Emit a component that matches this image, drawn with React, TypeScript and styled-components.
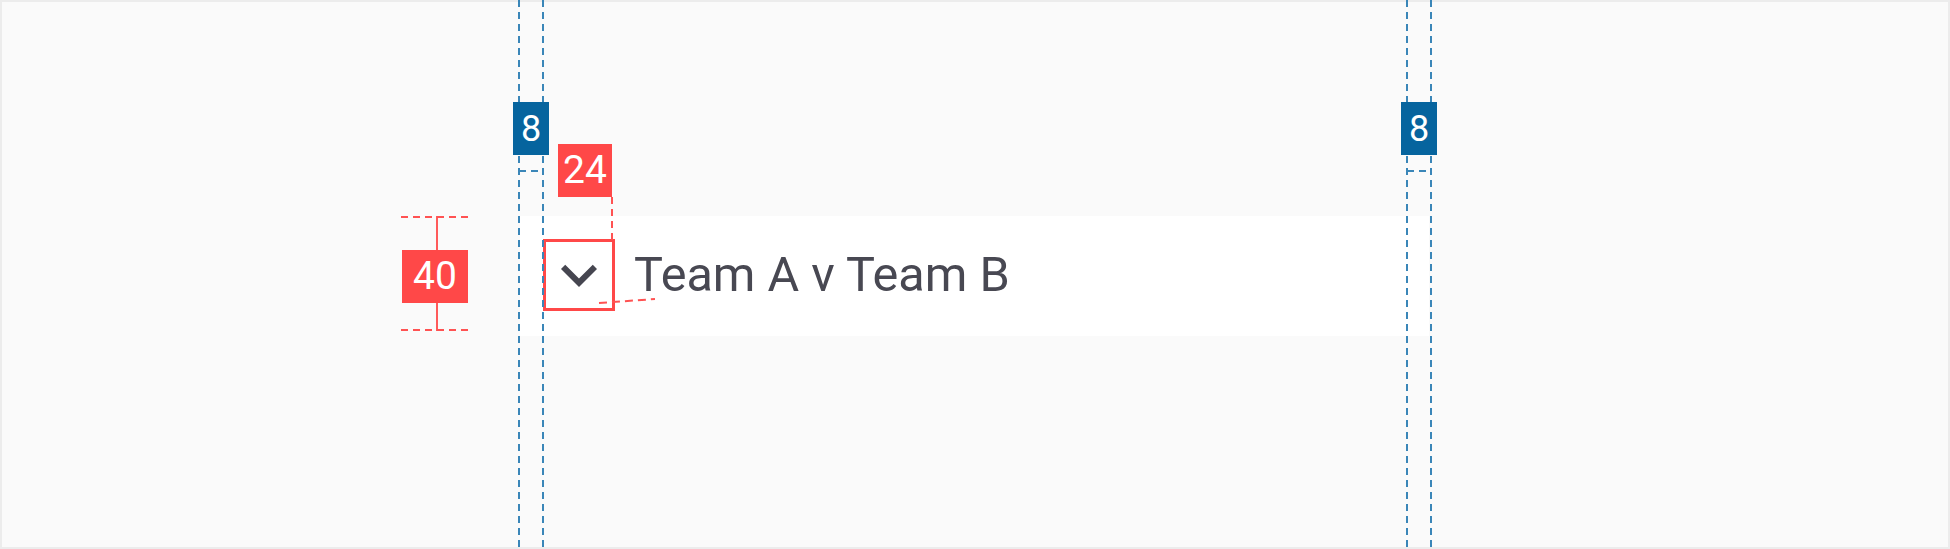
import React from "react";
import styled, { createGlobalStyle } from "styled-components";

const GlobalStyle = createGlobalStyle`
  html, body {
    margin: 0;
    padding: 0;
    background: #fafafa;
  }
  body {
    font-family: Roboto, "Noto Sans", "Liberation Sans", sans-serif;
  }
  * { box-sizing: border-box; }
`;

const BLUE = "#3a86b8";
const RED = "#ff5252";
const BADGE_RED = "#ff4848";
const BADGE_BLUE = "#06649e";

const Frame = styled.div`
  position: relative;
  width: 1950px;
  height: 549px;
  overflow: hidden;
  background: #fafafa;
  box-shadow: inset 0 0 0 2px #ececec;
  padding: 216px 0 0 520px;
`;

const Row = styled.div`
  display: flex;
  align-items: center;
  gap: 19px;
  width: 909px;
  height: 120px;
  padding-left: 23px;
  background: #ffffff;
`;

const CheckBox = styled.div`
  display: flex;
  align-items: center;
  justify-content: center;
  width: 72px;
  height: 72px;
  flex: none;
  outline: 3px solid #ff4848;
  outline-offset: -3px;
  margin-top: -2px;
`;

const Label = styled.span`
  font-family: Roboto, "Noto Sans", sans-serif;
  font-size: 48.6px;
  line-height: 1;
  color: #484852;
  margin-bottom: 2px;
`;

/* ---------- spec annotations (overlay) ---------- */

const dashV = (color: string) =>
  `repeating-linear-gradient(to bottom, ${color} 0 7px, transparent 7px 12px)`;
const dashH = (color: string) =>
  `repeating-linear-gradient(to right, ${color} 0 7px, transparent 7px 12px)`;

const Badge = styled.div<{ $bg: string; $w: number; $fs: number }>`
  width: ${(p) => p.$w}px;
  height: 53px;
  flex: none;
  background: ${(p) => p.$bg};
  color: #ffffff;
  display: flex;
  align-items: center;
  justify-content: center;
  font-family: Roboto, "Noto Sans", sans-serif;
  font-size: ${(p) => p.$fs}px;
  line-height: 1;
  position: relative;
  z-index: 1;
`;

/* 8-unit padding guide: two dashed verticals with a badge */
const SpacingGuide = styled.div<{ $x: number }>`
  position: absolute;
  top: 0;
  left: ${(p) => p.$x - 1}px;
  width: 26px;
  height: 100%;
  display: flex;
  flex-direction: column;
  align-items: center;
  padding-top: 102px;
  gap: 15px;
  background:
    ${dashV(BLUE)} left top / 2px 100% no-repeat,
    ${dashV(BLUE)} right top / 2px 100% no-repeat;
`;

const GuideTick = styled.div`
  align-self: flex-start;
  margin-left: 1px;
  width: 19px;
  height: 2px;
  background: ${dashH(BLUE)};
`;

/* 24-unit checkbox size callout */
const SizeCallout = styled.div`
  position: absolute;
  left: 558px;
  top: 144px;
  display: flex;
  flex-direction: column;
  align-items: flex-end;
`;

const CalloutTail = styled.div`
  width: 2px;
  height: 48px;
  margin-right: -1px;
  background: ${dashV(RED)};
`;

const DiagonalSvg = styled.svg`
  position: absolute;
  left: 0;
  top: 0;
`;

/* 40-unit row height measure */
const HeightMeasure = styled.div`
  position: absolute;
  left: 401px;
  top: 216px;
  width: 68px;
  height: 115px;
  display: flex;
  align-items: center;
  justify-content: center;
  padding-top: 5px;
  background:
    ${dashH(RED)} left top / 100% 2px no-repeat,
    ${dashH(RED)} left bottom / 100% 2px no-repeat,
    linear-gradient(#ff5a5a, #ff5a5a) 35px 0 / 2px 100% no-repeat;
`;

const Chevron = () => (
  <svg width="72" height="72" viewBox="0 0 24 24" aria-hidden="true">
    <path d="M16.59 8.59L12 13.17 7.41 8.59 6 10l6 6 6-6z" fill="#464650" />
  </svg>
);

export default function App() {
  return (
    <>
      <GlobalStyle />
      <Frame>
        <Row>
          <CheckBox>
            <Chevron />
          </CheckBox>
          <Label>Team A v Team B</Label>
        </Row>

        <SpacingGuide $x={519}>
          <Badge $bg={BADGE_BLUE} $w={36} $fs={36}>8</Badge>
          <GuideTick />
        </SpacingGuide>
        <SpacingGuide $x={1407}>
          <Badge $bg={BADGE_BLUE} $w={36} $fs={36}>8</Badge>
          <GuideTick />
        </SpacingGuide>

        <SizeCallout>
          <Badge $bg={BADGE_RED} $w={54} $fs={39}>24</Badge>
          <CalloutTail />
        </SizeCallout>
        <DiagonalSvg width="1950" height="549">
          <line
            x1="599"
            y1="303"
            x2="655"
            y2="299"
            stroke={RED}
            strokeWidth="2"
            strokeDasharray="8 5"
          />
        </DiagonalSvg>

        <HeightMeasure>
          <Badge $bg={BADGE_RED} $w={66} $fs={39}>40</Badge>
        </HeightMeasure>
      </Frame>
    </>
  );
}
